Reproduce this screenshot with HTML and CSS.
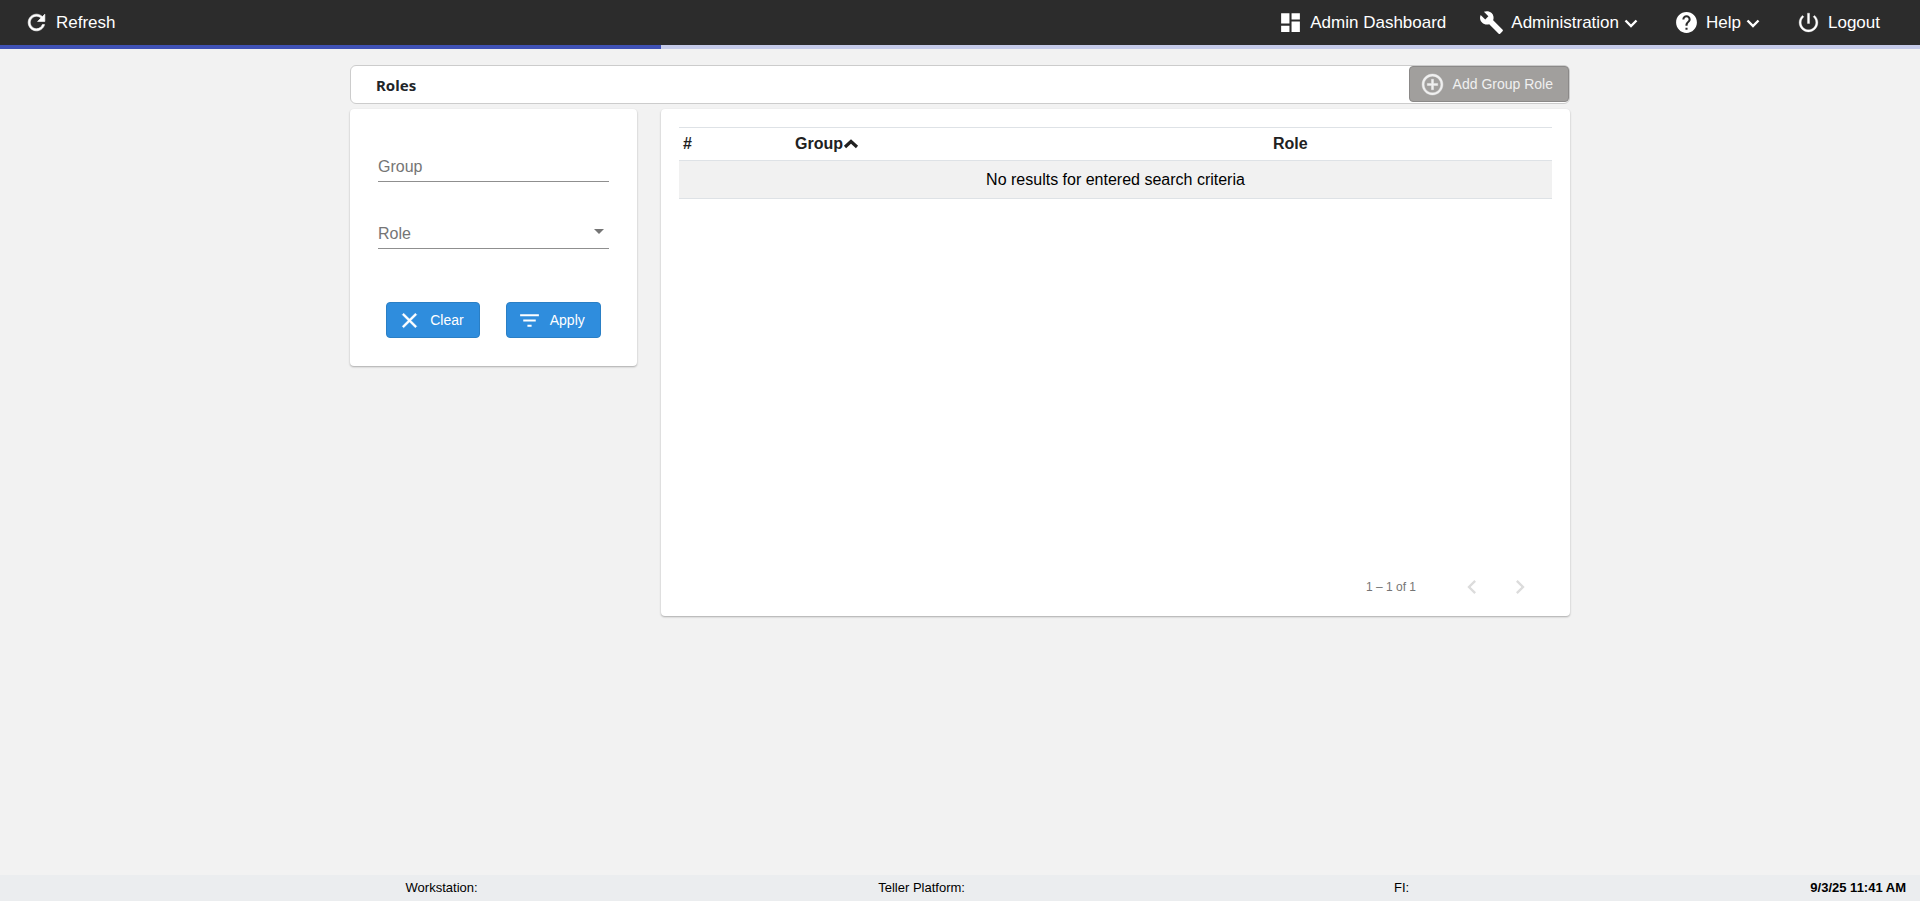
FILE: index.html
```html
<!DOCTYPE html>
<html lang="en">
    <head>
        <meta charset="UTF-8">
        <meta name="viewport" content="width=device-width, initial-scale=1">
        <title>Roles</title>
        <link rel="stylesheet" href="styles.css">
    </head>

    <body>
        <header class="toolbar">
            <button class="nav-item" type="button">
                <svg class="icon" viewBox="0 0 24 24"><path stroke="currentColor" stroke-width=".6" d="M17.65 6.35C16.2 4.9 14.21 4 12 4c-4.42 0-7.99 3.58-7.99 8s3.57 8 7.99 8c3.73 0 6.84-2.55 7.73-6h-2.08c-.82 2.33-3.04 4-5.65 4-3.31 0-6-2.69-6-6s2.69-6 6-6c1.66 0 3.14.69 4.22 1.78L13 11h7V4l-2.35 2.35z"/></svg>
                Refresh
            </button>
            <nav class="nav">
                <a class="nav-item" href="#dashboard">
                    <svg class="icon" viewBox="0 0 24 24"><path d="M3 13h8V3H3v10zm0 8h8v-6H3v6zm10 0h8V11h-8v10zm0-18v6h8V3h-8z"/></svg>
                    Admin Dashboard
                </a>
                <button class="nav-item" type="button">
                    <svg class="icon" viewBox="0 0 24 24"><path d="M22.7 19l-9.1-9.1c.9-2.3.4-5-1.5-6.9-2-2-5-2.4-7.4-1.3L9 6 6 9 1.6 4.7C.4 7.1.9 10.1 2.9 12.1c1.9 1.9 4.6 2.4 6.9 1.5l9.1 9.1c.4.4 1 .4 1.4 0l2.3-2.3c.5-.4.5-1.1.1-1.4z"/></svg>
                    Administration
                    <svg class="chevron" viewBox="0 0 20 20"><path d="M4.5 7.5l5.5 5.5 5.5-5.5"/></svg>
                </button>
                <button class="nav-item" type="button">
                    <svg class="icon" viewBox="0 0 24 24"><path d="M12 2C6.48 2 2 6.48 2 12s4.48 10 10 10 10-4.48 10-10S17.52 2 12 2zm1 17h-2v-2h2v2zm2.07-7.75l-.9.92C13.45 12.9 13 13.5 13 15h-2v-.5c0-1.1.45-2.1 1.17-2.83l1.24-1.26c.37-.36.59-.86.59-1.41 0-1.1-.9-2-2-2s-2 .9-2 2H8c0-2.21 1.79-4 4-4s4 1.79 4 4c0 .88-.36 1.68-.93 2.25z"/></svg>
                    Help
                    <svg class="chevron" viewBox="0 0 20 20"><path d="M4.5 7.5l5.5 5.5 5.5-5.5"/></svg>
                </button>
                <button class="nav-item" type="button">
                    <svg class="icon" viewBox="0 0 24 24"><path stroke="currentColor" stroke-width=".3" d="M13 3h-2v10h2V3zm4.83 2.17l-1.42 1.42C17.99 7.86 19 9.81 19 12c0 3.87-3.13 7-7 7s-7-3.13-7-7c0-2.19 1.01-4.14 2.58-5.42L6.17 5.17C4.23 6.82 3 9.26 3 12c0 4.97 4.03 9 9 9s9-4.03 9-9c0-2.74-1.23-5.18-3.17-6.83z"/></svg>
                    Logout
                </button>
            </nav>
        </header>
        <div class="progress"><div class="progress-bar" style="width: 34.45%"></div></div>

        <main class="content">
            <div class="title-bar">
                <h1>Roles</h1>
                <button class="btn btn-disabled" type="button" disabled>
                    <svg class="icon" viewBox="0 0 24 24"><path stroke="currentColor" stroke-width=".4" d="M13 7h-2v4H7v2h4v4h2v-4h4v-2h-4V7zm-1-5C6.48 2 2 6.48 2 12s4.48 10 10 10 10-4.48 10-10S17.52 2 12 2zm0 18c-4.41 0-8-3.59-8-8s3.59-8 8-8 8 3.59 8 8-3.59 8-8 8z"/></svg>
                    Add Group Role
                </button>
            </div>

            <div class="columns">
                <form class="card filter">
                    <div class="field">
                        <input type="text" id="group">
                        <label for="group">Group</label>
                    </div>
                    <div class="field">
                        <select id="role"><option value=""></option></select>
                        <label for="role">Role</label>
                        <span class="arrow"></span>
                    </div>
                    <div class="filter-buttons">
                        <button class="btn btn-primary" type="reset">
                            <svg class="icon" viewBox="0 0 24 24"><path stroke="currentColor" stroke-width=".4" d="M19 6.41L17.59 5 12 10.59 6.41 5 5 6.41 10.59 12 5 17.59 6.41 19 12 13.41 17.59 19 19 17.59 13.41 12z"/></svg>
                            Clear
                        </button>
                        <button class="btn btn-primary" type="button">
                            <svg class="icon" viewBox="0 0 24 24"><path d="M10 18h4v-2h-4v2zM3 6v2h18V6H3zm3 7h12v-2H6v2z"/></svg>
                            Apply
                        </button>
                    </div>
                </form>

                <section class="card results">
                    <div class="table-wrap">
                        <table>
                            <colgroup>
                                <col class="col-num">
                                <col class="col-group">
                                <col>
                            </colgroup>
                            <thead>
                                <tr>
                                    <th>#</th>
                                    <th>Group<svg class="sort" viewBox="0 0 16 10"><path d="M2 8l6-5.5L14 8"/></svg></th>
                                    <th>Role</th>
                                </tr>
                            </thead>
                            <tbody>
                                <tr>
                                    <td colspan="3">No results for entered search criteria</td>
                                </tr>
                            </tbody>
                        </table>
                    </div>
                    <div class="paginator">
                        <span class="range">1 – 1 of 1</span>
                        <button type="button" aria-label="Previous page" disabled>
                            <svg viewBox="0 0 24 24"><path d="M15.41 7.41L14 6l-6 6 6 6 1.41-1.41L10.83 12z"/></svg>
                        </button>
                        <button type="button" aria-label="Next page" disabled>
                            <svg viewBox="0 0 24 24"><path d="M10 6L8.59 7.41 13.17 12l-4.58 4.59L10 18l6-6z"/></svg>
                        </button>
                    </div>
                </section>
            </div>
        </main>

        <footer class="status">
            <span>Workstation:</span>
            <span>Teller Platform:</span>
            <span>FI:</span>
            <span class="clock">9/3/25 11:41 AM</span>
        </footer>
    </body>
</html>
```
FILE: styles.css
```css
* {
    box-sizing: border-box;
}

body {
    margin: 0;
    min-height: 100vh;
    display: flex;
    flex-direction: column;
    background: #f2f2f2;
    color: #000;
    font-family: "Liberation Sans", Arial, sans-serif;
    font-size: 16px;
}

button {
    font-family: inherit;
    cursor: pointer;
}

button:disabled {
    cursor: default;
}

.icon {
    width: 25px;
    height: 25px;
    fill: currentColor;
    flex: none;
}

/* top bar */
.toolbar {
    display: flex;
    justify-content: space-between;
    height: 45px;
    padding: 0 40px 0 24px;
    background: #2c2c2c;
}

.nav {
    display: flex;
    gap: 33px;
}

.nav-item {
    display: flex;
    align-items: center;
    gap: 7px;
    padding: 0;
    border: 0;
    background: none;
    color: #fff;
    font-size: 17px;
    text-decoration: none;
    white-space: nowrap;
}

.chevron {
    width: 20px;
    height: 20px;
    margin-left: -5px;
    fill: none;
    stroke: currentColor;
    stroke-width: 2.4;
}

.progress {
    height: 4px;
    background: #c5cae9;
}

.progress-bar {
    height: 100%;
    background: #3f51b5;
}

/* page */
.content {
    flex: 1;
    width: 100%;
    max-width: 1220px;
    margin: 0 auto;
    padding-top: 16px;
}

.title-bar {
    display: flex;
    align-items: flex-start;
    justify-content: space-between;
    height: 39px;
    margin-bottom: 5px;
    border: 1px solid #ccc;
    border-radius: 6px;
    background: #fff;
}

.title-bar h1 {
    margin: 0;
    padding-left: 25px;
    color: #212529;
    font: bold 15px/39px "Noto Sans", sans-serif;
}

.btn {
    display: flex;
    align-items: center;
    gap: 8px;
    height: 36px;
    padding: 0 15px 0 10px;
    border: 1px solid;
    border-radius: 4px;
    font-size: 14px;
    white-space: nowrap;
}

.btn-primary {
    border-color: #2a7fc5;
    background: #2f8ddd;
    color: #fff;
}

.btn-disabled {
    border-color: #8b8988;
    background: #a19f9d;
    color: #f0f0f0;
}

.columns {
    display: grid;
    grid-template-columns: 287px 1fr;
    gap: 24px;
    align-items: start;
}

.card {
    border-radius: 4px;
    background: #fff;
    box-shadow: 0 1px 2px rgba(0, 0, 0, .3);
}

/* filter */
.filter {
    padding: 37px 28px 28px;
}

.field {
    position: relative;
    height: 36px;
    margin-bottom: 31px;
}

.field input,
.field select {
    width: 100%;
    height: 100%;
    padding: 0;
    border: 0;
    border-bottom: 1px solid #8f8f8f;
    border-radius: 0;
    outline: none;
    background: none;
    font: inherit;
    appearance: none;
}

.field label {
    position: absolute;
    left: 0;
    top: 11px;
    color: #757575;
    line-height: 20px;
    pointer-events: none;
}

.arrow {
    position: absolute;
    right: 5px;
    top: 16px;
    border: 5px solid transparent;
    border-top-color: #757575;
    border-bottom: 0;
    pointer-events: none;
}

.filter-buttons {
    display: flex;
    justify-content: center;
    gap: 26px;
    margin-top: 53px;
}

/* results */
.results {
    padding: 18px 18px 0;
}

.table-wrap {
    min-height: 432px;
}

table {
    width: 100%;
    border-collapse: collapse;
    table-layout: fixed;
}

.col-num {
    width: 112px;
}

.col-group {
    width: 478px;
}

th {
    height: 33px;
    padding: 0 4px;
    border-top: 1px solid #dee2e6;
    border-bottom: 1px solid #dee2e6;
    color: #212121;
    text-align: left;
}

td {
    height: 38px;
    padding: 0 4px;
    border-bottom: 1px solid #dee2e6;
    background: #f1f1f1;
    text-align: center;
}

.sort {
    width: 16px;
    height: 10px;
    fill: none;
    stroke: currentColor;
    stroke-width: 3.2;
}

.paginator {
    display: flex;
    align-items: center;
    justify-content: flex-end;
    height: 57px;
    padding: 0 8px 1px 0;
}

.range {
    margin-right: 32px;
    color: #757575;
    font-size: 12px;
}

.paginator button {
    display: flex;
    align-items: center;
    justify-content: center;
    width: 48px;
    height: 48px;
    padding: 0;
    border: 0;
    background: none;
    color: #dcdcdc;
}

.paginator svg {
    width: 28px;
    height: 28px;
    fill: currentColor;
}

/* status bar */
.status {
    display: grid;
    grid-template-columns: repeat(3, 25vw) 1fr;
    align-items: center;
    height: 26px;
    padding: 0 14px 2px 10.5vw;
    background: #ebedef;
    font-size: 13px;
    text-align: center;
}

.clock {
    font-weight: bold;
    text-align: right;
}
```
